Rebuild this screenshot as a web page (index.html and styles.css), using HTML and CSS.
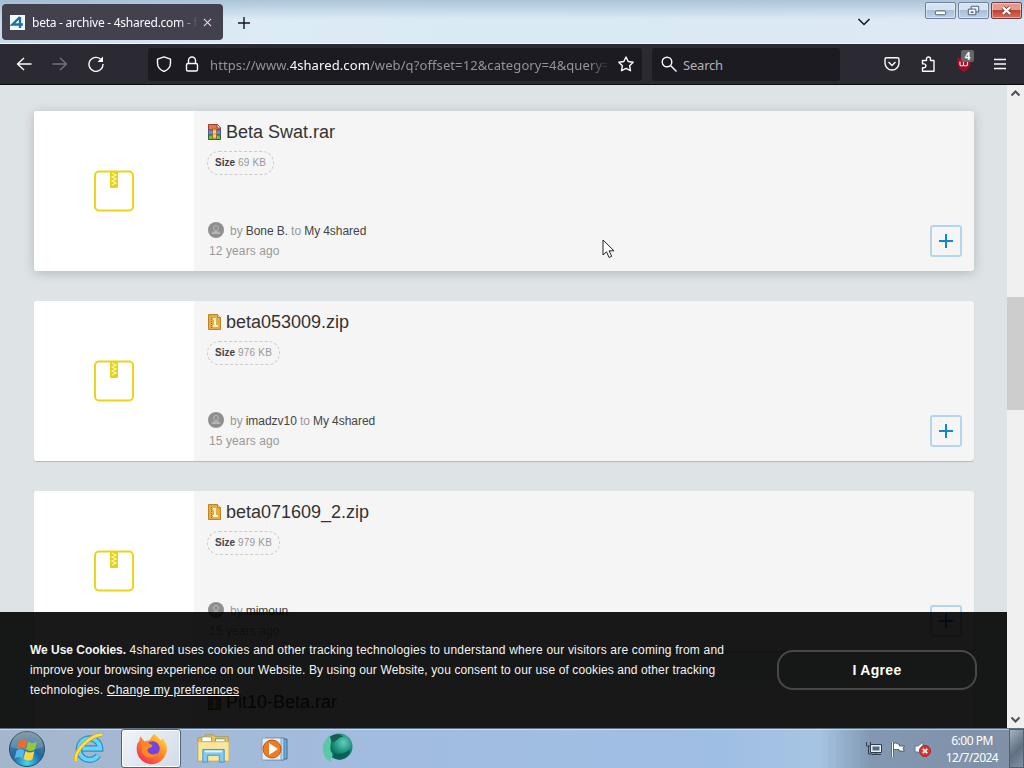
FILE: index.html
```html
<!DOCTYPE html>
<html lang="en">
<head>
    <meta charset="UTF-8">
    <meta name="viewport" content="width=device-width, initial-scale=1.0">
    <title>beta - archive - 4shared.com</title>
    <link rel="stylesheet" href="styles.css">
</head>
<body>
    <!-- shared icons -->
    <svg class="defs">
        <symbol id="box" viewBox="0 0 40 42">
            <rect x="1" y="1.5" width="38" height="39" rx="4" fill="none" stroke="#ead51c" stroke-width="2"/>
            <rect x="16" y="1" width="8" height="17" rx="1" fill="#e8d11c"/>
            <path d="M18 3l4 2-4 2 4 2-4 2 4 2-4 2" fill="none" stroke="#fff8a8" stroke-width="1.2"/>
        </symbol>
        <symbol id="zip" viewBox="0 0 13 16">
            <path d="M.5.5h9l3 3v12H.5z" fill="#e5ac45" stroke="#bb8424"/>
            <path d="M9.500.5v3h3" fill="#f8dfa6" stroke="#bb8424"/>
            <path d="M3.500 3v12" stroke="#a8741c" stroke-dasharray="1 1"/>
            <path d="M5 4h3v7h2v2H5v-2h1V6H5z" fill="#fff3d2"/>
        </symbol>
        <symbol id="rar" viewBox="0 0 13 16">
            <path d="M.5.5h9l3 3V6H.5z" fill="#e07a4e" stroke="#a33b2a"/>
            <path d="M9 .5v3.500h3.500" fill="#fff" stroke="#a33b2a"/>
            <path d="M.5 6h12v5H.5z" fill="#7385d6" stroke="#4d559c"/>
            <path d="M.5 11h12v4.500H.5z" fill="#6fc236" stroke="#2e681f"/>
            <path d="M4.500 5h4v10h-4z" fill="#e0b55a" stroke="#8b5f30" stroke-width=".7"/>
            <path d="M5 8h3M5 12h3" stroke="#fff0ab"/>
        </symbol>
        <symbol id="user" viewBox="0 0 16 16">
            <circle cx="8" cy="8" r="8" fill="#8f8f8f"/>
            <circle cx="8" cy="6" r="2.500" fill="none" stroke="#b8b8b8"/>
            <path d="M3.500 12c0-4 9-4 9 0z" fill="#b5b5b5"/>
        </symbol>
        <symbol id="plus" viewBox="0 0 16 16">
            <path d="M8 1v14M1 8h14" stroke="currentColor" stroke-width="2"/>
        </symbol>
    </svg>

    <div class="screen">
        <header class="titlebar">
            <div class="tab">
                <svg class="favicon" viewBox="0 0 15 15">
                    <path d="M0 0h15v15H0z" fill="#f2fafc"/>
                    <path d="M10 2L2.500 9.500H13M10 2v11" fill="none" stroke="#16769b" stroke-width="2.400"/>
                </svg>
                <span class="tab-title">beta - archive - 4shared.com - f</span>
                <svg class="tab-close" viewBox="0 0 10 10"><path d="M1 1l8 8M9 1L1 9"/></svg>
            </div>
            <svg class="new-tab" viewBox="0 0 12 12"><path d="M6 0v12M0 6h12"/></svg>
            <svg class="list-tabs" viewBox="0 0 14 8"><path d="M1.500 1l5.500 5.500L12.500 1"/></svg>
            <div class="window-buttons">
                <div class="wb"><svg viewBox="0 0 30 16"><rect x="9.500" y="8.500" width="11" height="4" rx="1" fill="#fff" stroke="#4c5a70"/></svg></div>
                <div class="wb"><svg viewBox="0 0 30 16"><g fill="#eef3fa" stroke="#4c5a70"><path d="M12.500 3.500h8v6h-8z"/><path d="M9.500 6.500h8v6h-8z"/></g><path d="M12 9h3v1.500h-3z" fill="#4c5a70"/></svg></div>
                <div class="wb wb-close"><svg viewBox="0 0 30 16"><path d="M11 4.500l8 7M19 4.500l-8 7" stroke="#693b40" stroke-width="4"/><path d="M11 4.500l8 7M19 4.500l-8 7" stroke="#fff" stroke-width="2.400"/></svg></div>
            </div>
        </header>

        <nav class="toolbar">
            <svg class="ico back" viewBox="0 0 16 16"><path d="M15.500 8H1.500M8 2L1.500 8 8 14"/></svg>
            <svg class="ico forward" viewBox="0 0 16 16"><path d="M.5 8h14M8 2l6.500 6L8 14"/></svg>
            <svg class="ico reload" viewBox="0 0 16 16"><path d="M13.500 4A7 7 0 1 0 15 8"/><path d="M15 .5V6H9.500z" fill="#fbfbfe" stroke="none"/></svg>
            <div class="urlbar">
                <svg class="ico" viewBox="0 0 16 16"><path d="M8 .8l6.500 2.400V7c0 4-2.800 7-6.500 8.500C4.300 14 1.500 11 1.500 7V3.200z"/></svg>
                <svg class="ico lock" viewBox="0 0 16 16"><rect x="2.500" y="7.500" width="11" height="7.500" rx="1.500"/><path d="M4.500 7.500V4.500a3.500 3.500 0 0 1 7 0v3"/></svg>
                <div class="url">https://www.<b>4shared.com</b>/web/q?offset=12&amp;category=4&amp;query=</div>
                <svg class="ico star" viewBox="0 0 16 16"><path d="M8 1l2.200 4.500 5 .7-3.600 3.500.9 5L8 12.400l-4.500 2.300.9-5L.8 6.200l5-.7z"/></svg>
            </div>
            <div class="searchbar">
                <svg class="ico" viewBox="0 0 16 16"><circle cx="6" cy="6" r="4.800"/><path d="M9.500 9.500l6 6"/></svg>
                <span>Search</span>
            </div>
            <div class="tools">
                <svg class="ico" viewBox="0 0 16 16"><path d="M2.500 1.700h11a1.500 1.500 0 0 1 1.500 1.500V7a7 7 0 0 1-14 0V3.200a1.500 1.500 0 0 1 1.500-1.500z"/><path d="M4.500 6L8 9.500 11.500 6"/></svg>
                <svg class="ico" viewBox="0 0 16 16"><path d="M2.500 4.500h4V3a2 2 0 0 1 4 0v1.500H14v10.700H2.500v-3.500H4a1.900 1.900 0 0 0 0-3.800H2.500z"/></svg>
                <div class="ublock">
                    <svg viewBox="0 0 16 16"><path d="M8 0c2 1.500 4 2 6.500 2v5c0 4-2.500 7-6.500 9-4-2-6.500-5-6.500-9V2C4 2 6 1.500 8 0z" fill="#a30c25"/><path d="M4 5.500v3c0 2 3.500 2 3.500 0V6v2.500c0 2 4 2 4 0V6" fill="none" stroke="#f5e9ee" stroke-width="1.200"/></svg>
                    <span class="badge">4</span>
                </div>
                <svg class="ico menu" viewBox="0 0 16 16"><path d="M2 3.500h12M2 8h12M2 12.500h12"/></svg>
            </div>
        </nav>

        <div class="viewport">
            <main class="results">
                <article class="card hover">
                    <div class="thumb"><svg><use href="#box"/></svg></div>
                    <div class="info">
                        <h2><svg><use href="#rar"/></svg>Beta Swat.rar</h2>
                        <div class="size"><b>Size</b> 69 KB</div>
                        <div class="author"><svg><use href="#user"/></svg><span>by <a>Bone B.</a> to <a>My 4shared</a></span></div>
                        <div class="date">12 years ago</div>
                    </div>
                    <div class="add"><svg><use href="#plus"/></svg></div>
                </article>
                <article class="card">
                    <div class="thumb"><svg><use href="#box"/></svg></div>
                    <div class="info">
                        <h2><svg><use href="#zip"/></svg>beta053009.zip</h2>
                        <div class="size"><b>Size</b> 976 KB</div>
                        <div class="author"><svg><use href="#user"/></svg><span>by <a>imadzv10</a> to <a>My 4shared</a></span></div>
                        <div class="date">15 years ago</div>
                    </div>
                    <div class="add"><svg><use href="#plus"/></svg></div>
                </article>
                <article class="card">
                    <div class="thumb"><svg><use href="#box"/></svg></div>
                    <div class="info">
                        <h2><svg><use href="#zip"/></svg>beta071609_2.zip</h2>
                        <div class="size"><b>Size</b> 979 KB</div>
                        <div class="author"><svg><use href="#user"/></svg><span>by <a>mimoun</a></span></div>
                        <div class="date">15 years ago</div>
                    </div>
                    <div class="add"><svg><use href="#plus"/></svg></div>
                </article>
                <article class="card">
                    <div class="thumb"></div>
                    <div class="info">
                        <h2><svg><use href="#rar"/></svg>Pit10-Beta.rar</h2>
                    </div>
                </article>
            </main>
            <div class="scrollbar">
                <svg viewBox="0 0 17 17"><path d="M4.500 10.500l4-4 4 4"/></svg>
                <div class="thumb-bar"></div>
                <svg viewBox="0 0 17 17"><path d="M4.500 6.500l4 4 4-4"/></svg>
            </div>
            <div class="cookies">
                <p>
                    <b>We Use Cookies.</b> 4shared uses cookies and other tracking technologies to understand where our visitors are coming from and<br>
                    <span class="line2">improve your browsing experience on our Website. By using our Website, you consent to our use of cookies and other tracking</span><br>
                    technologies. <u>Change my preferences</u>
                </p>
                <button class="agree">I Agree</button>
            </div>
        </div>

        <footer class="taskbar">
            <div class="task start">
                <svg viewBox="0 0 38 38">
                    <defs><radialGradient id="orb" cx=".5" cy=".9" r=".9"><stop offset="0" stop-color="#45d5f2"/><stop offset=".45" stop-color="#1e6aa0"/><stop offset="1" stop-color="#6d8795"/></radialGradient></defs>
                    <circle cx="19" cy="19" r="17.500" fill="url(#orb)" stroke="#294c68"/>
                    <path d="M3 17a16 16 0 0 1 32 0c-10 4-22 4-32 0z" fill="#fff" opacity=".18"/>
                    <path d="M11 11q4-3 8 0l-2 8q-4-3-8 0z" fill="#ee6b2e"/>
                    <path d="M20 11.500q4 3 9 0l-2 8q-4 3-9 0z" fill="#93c83e"/>
                    <path d="M8.500 20.500q4-3 8 0l-2 8q-4-3-8 0z" fill="#54b6ea"/>
                    <path d="M17.500 21q4 3 9 0l-2 8q-4 3-9 0z" fill="#fbd542"/>
                </svg>
            </div>
            <div class="task">
                <svg viewBox="0 0 34 34">
                    <path d="M26 24a11 11 0 1 1 2-7H10" fill="none" stroke="#2a91ca" stroke-width="6.500"/>
                    <path d="M26 24a11 11 0 1 1 2-7H10" fill="none" stroke="#69d4f5" stroke-width="4"/>
                    <path d="M30 3C22 1 1 17 3 30" fill="none" stroke="#d9a91d" stroke-width="4"/>
                    <path d="M30 3C22 1 1 17 3 30" fill="none" stroke="#ffe24b" stroke-width="2.400"/>
                </svg>
            </div>
            <div class="task active">
                <svg viewBox="0 0 32 32">
                    <defs><linearGradient id="fox" x1="1" y1="0" x2=".2" y2="1"><stop offset="0" stop-color="#fff15a"/><stop offset=".4" stop-color="#ff9a24"/><stop offset="1" stop-color="#f12c55"/></linearGradient></defs>
                    <path d="M5 4l4 5 5-1 4-6c5 2 5 5 7 6l2-2c4 6 5 10 3 15a14.500 14.500 0 0 1-28-1C1 15 2 10 4 9z" fill="url(#fox)"/>
                    <circle cx="17" cy="16" r="7" fill="#7543df"/>
                    <path d="M6 11c5-2 8 0 11 2-1 3-5 2-5 5 1 4 6 5 10 2-3 7-12 6-15 0z" fill="#ff8a22"/>
                </svg>
            </div>
            <div class="task">
                <svg viewBox="0 0 34 34">
                    <path d="M1 6h6l2-3h8l2 2h13v25H1z" fill="#e8c75c" stroke="#b99233"/>
                    <path d="M5 5h10v5H5z" fill="#fff" stroke="#93a469"/><path d="M19 7h10v4H19z" fill="#f5fff1" stroke="#819b70"/>
                    <path d="M1 10h32v20H1z" fill="#f8e69c" stroke="#d6b457"/>
                    <path d="M6 18h22v13h-5v-7H11v7H6z" fill="#83c9ef" stroke="#4b95c4"/><path d="M8 20h18" stroke="#d9f5ff" stroke-width="2"/>
                </svg>
            </div>
            <div class="task wmp">
                <svg viewBox="0 0 28 28">
                    <path d="M7 4h19v20H7z" fill="#72a9d6" stroke="#3c71a2"/><path d="M4 3h19v22H4z" fill="#b0d5ec" stroke="#5283ad"/><path d="M1 3h19v22H1z" fill="#e4edf4" stroke="#8ba4b8"/>
                    <circle cx="11" cy="14" r="9" fill="#ee7a22" stroke="#b95816"/><path d="M8 8l9 6-9 6z" fill="#fff"/>
                </svg>
            </div>
            <div class="task">
                <svg viewBox="0 0 34 34">
                    <defs><radialGradient id="orb2" cx=".65" cy=".35"><stop offset="0" stop-color="#5fcfba"/><stop offset="1" stop-color="#087564"/></radialGradient></defs>
                    <circle cx="19" cy="15" r="13.500" fill="url(#orb2)"/>
                    <path d="M10 3C-2 10 0 28 11 31c-2-5 3-7 0-10-3-4 0-7-1-18z" fill="#59c9a7"/>
                    <path d="M9 5c5-4 12-3 14 0-5 0-7 5-11 6z" fill="#185e56"/><path d="M13 21c5 3 12 1 17-3-2 10-12 13-17 8z" fill="#0a5f55"/>
                </svg>
            </div>
            <div class="tray">
                <svg viewBox="0 0 18 18"><g fill="#e9f1f8" stroke="#303f50"><path d="M5.500 4.500h11v8h-11z"/><path d="M7 14.500h9M11 12.500v2"/><path d="M1.500 2v4h4V2M3.500 6v8h4" fill="none"/></g><path d="M7.500 6.500h7v4h-7z" fill="#566b80"/></svg>
                <svg viewBox="0 0 18 18"><path d="M3.500 2v15" stroke="#2c3b4d" stroke-width="3"/><path d="M3.500 2v15" stroke="#fff" stroke-width="1.500"/><path d="M4.500 3.500c3-1.500 4 1 6 1V6h5l-1.500 2.500L15.500 11H10V9.500H4.500z" fill="#fff" stroke="#394a5e" stroke-width=".8"/></svg>
                <svg class="sound" viewBox="0 0 18 18"><path d="M2 6h3l5-4v14l-5-4H2z" fill="#f8fbff" stroke="#63758a"/><circle cx="12" cy="11" r="5.500" fill="#d8352d" stroke="#a32828"/><path d="M9.800 8.800l4.400 4.400M14.200 8.800l-4.400 4.400" stroke="#fff" stroke-width="1.700"/></svg>
            </div>
            <div class="clock"><span>6:00 PM</span><span>12/7/2024</span></div>
            <div class="show-desktop"></div>
        </footer>

        <svg class="cursor" viewBox="0 0 13 20"><path d="M1 1v15l3.500-3.200 2.600 5.700 2.600-1.200-2.600-5.500H12z" fill="#fff" stroke="#222"/></svg>
    </div>
</body>
</html>
```
FILE: styles.css
```css
* { margin: 0; padding: 0; box-sizing: border-box; }
body {
    overflow: hidden;
    font-family: "Liberation Sans", Arial, sans-serif;
}
svg { display: block; flex: none; }
.defs { position: absolute; width: 0; height: 0; }
.screen {
    position: relative;
    width: 1024px;
    height: 768px;
    display: flex;
    flex-direction: column;
    overflow: hidden;
}

/* browser window */
.titlebar {
    height: 44px;
    display: flex;
    align-items: flex-start;
    background: linear-gradient(rgba(133, 165, 194, 0.55), rgba(255, 255, 255, 0) 45%), linear-gradient(90deg, #c7d9ea, #dcebf5 25%, #d9eaf4 60%, #dfe8f5);
    border-bottom: 1px solid #f3f8fc;
}
.tab {
    width: 221px;
    height: 36px;
    margin: 4px 0 0 2px;
    padding: 0 11px 0 8px;
    display: flex;
    align-items: center;
    background: #42414d;
    border-radius: 4px;
    color: #fbfbfe;
    font-family: "Noto Sans", sans-serif;
    font-size: 12px;
}
.favicon { width: 15px; height: 15px; }
.tab-title {
    width: 166px;
    margin: 0 5px 0 7px;
    overflow: hidden;
    white-space: nowrap;
    letter-spacing: -0.25px;
    -webkit-mask-image: linear-gradient(90deg, #000 88%, transparent);
    mask-image: linear-gradient(90deg, #000 88%, transparent);
}
.tab-close { width: 9px; height: 9px; stroke: #dedee4; stroke-width: 1.2; }
.new-tab { width: 12px; height: 12px; margin: 17px 0 0 15px; stroke: #15141a; stroke-width: 1.4; }
.list-tabs { width: 14px; height: 8px; margin: 18px 54px 0 auto; stroke: #15141a; stroke-width: 1.5; fill: none; }
.window-buttons { display: flex; gap: 2px; padding: 2px 2px 0 0; }
.wb {
    width: 31px;
    height: 17px;
    border: 1px solid #6f839e;
    border-radius: 2px;
    background: linear-gradient(#d5e2f1 45%, #a9bfd9 50%, #bfd2e7);
    box-shadow: inset 0 0 0 1px rgba(255, 255, 255, 0.4);
}
.wb svg { width: 29px; height: 15px; }
.wb-close { background: linear-gradient(#e49a8d 45%, #c3412e 50%, #d4705d); border-color: #713b43; }

.toolbar {
    height: 41px;
    padding-left: 16px;
    display: flex;
    align-items: center;
    background: #2b2a33;
    border-bottom: 1px solid #0c0c0e;
    font-family: "Noto Sans", sans-serif;
    color: #fbfbfe;
}
.ico { width: 16px; height: 16px; fill: none; stroke: #fbfbfe; stroke-width: 1.4; stroke-linejoin: round; }
.forward { margin-left: 20px; stroke: #74737b; }
.reload { margin-left: 20px; }
.urlbar {
    width: 494px;
    height: 33px;
    margin-left: 44px;
    padding: 0 8px;
    display: flex;
    align-items: center;
    background: #1c1b22;
    border-radius: 3px;
}
.lock { margin-left: 12px; }
.url {
    width: 399px;
    margin: 0 9px 0 10px;
    padding-top: 1px;
    overflow: hidden;
    white-space: nowrap;
    font-size: 13px;
    letter-spacing: 0.1px;
    color: #94939b;
    -webkit-mask-image: linear-gradient(90deg, #000 95%, transparent);
    mask-image: linear-gradient(90deg, #000 95%, transparent);
}
.url b { font-weight: normal; color: #fbfbfe; }
.searchbar {
    width: 188px;
    height: 33px;
    margin-left: 10px;
    padding-left: 9px;
    display: flex;
    align-items: center;
    gap: 6px;
    background: #1c1b22;
    border-radius: 3px;
    font-size: 13px;
    letter-spacing: -0.2px;
    color: #b3b2b9;
}
.searchbar span { padding-top: 1px; }
.tools { display: flex; gap: 20px; margin-left: 44px; }
.ublock { position: relative; width: 16px; height: 16px; }
.badge {
    position: absolute;
    left: 5px;
    top: -6px;
    width: 13px;
    height: 12px;
    border-radius: 2px;
    background: #666;
    font-size: 10px;
    font-weight: bold;
    line-height: 12px;
    text-align: center;
}

/* page */
.viewport {
    position: relative;
    height: 643px;
    display: flex;
    overflow: hidden;
}
.results {
    width: 1007px;
    padding: 26px 33px 0 34px;
    display: flex;
    flex-direction: column;
    gap: 30px;
    background: #dee4e6;
}
.card {
    flex: none;
    height: 160px;
    display: flex;
    background: #f5f5f5;
    border-radius: 3px;
    box-shadow: 0 1px 1px rgba(0, 0, 0, 0.2);
}
.card.hover { box-shadow: 0 2px 12px rgba(0, 0, 0, 0.2); }
.thumb {
    width: 160px;
    display: flex;
    align-items: center;
    justify-content: center;
    background: #fff;
    border-radius: 3px 0 0 3px;
}
.thumb svg { width: 40px; height: 42px; }
.info {
    flex: 1;
    padding: 9px 0 11px 13px;
    display: flex;
    flex-direction: column;
    align-items: flex-start;
    font-size: 12px;
    color: #999;
}
.info h2 {
    display: flex;
    align-items: center;
    gap: 5px;
    padding-left: 1px;
    font-size: 18px;
    font-weight: normal;
    line-height: 24px;
    color: #333;
}
.info h2 svg { width: 13px; height: 16px; }
.size {
    height: 24px;
    margin-top: 7px;
    padding: 0 7px;
    border: 1px dashed #ccc;
    border-radius: 12px;
    font-size: 10px;
    line-height: 22px;
    letter-spacing: 0.2px;
    color: #999;
}
.size b { color: #444; letter-spacing: 0; }
.author {
    display: flex;
    align-items: center;
    gap: 6px;
    height: 18px;
    margin-top: auto;
    padding-left: 1px;
    letter-spacing: -0.03px;
    word-spacing: -0.2px;
}
.author svg { width: 16px; height: 16px; margin-top: -2px; }
.author a { color: #444; }
.date { padding: 3px 0 0 2px; line-height: 17px; letter-spacing: 0.1px; }
.add {
    width: 32px;
    height: 32px;
    margin: 114px 12px 0 0;
    display: flex;
    align-items: center;
    justify-content: center;
    border: 2px solid #b4d6ec;
    border-radius: 3px;
    color: #1684ca;
}
.add svg { width: 16px; height: 16px; }
.scrollbar {
    width: 17px;
    display: flex;
    flex-direction: column;
    background: #f0f0f0;
}
.scrollbar svg { width: 17px; height: 17px; fill: none; stroke: #505050; stroke-width: 2; }
.thumb-bar { height: 113px; margin: 195px 0 auto; background: #cdcdcd; }

/* cookie notice */
.cookies {
    position: absolute;
    left: 0;
    bottom: 0;
    width: 1007px;
    height: 116px;
    padding: 0 30px;
    display: flex;
    align-items: center;
    justify-content: space-between;
    background: rgba(0, 0, 0, 0.9);
    color: #f4f4f4;
    font-size: 12px;
    line-height: 20px;
}
.cookies p { white-space: nowrap; letter-spacing: 0.2px; }
.cookies b { letter-spacing: -0.03px; }
.line2 { letter-spacing: 0.115px; }
.agree {
    width: 200px;
    height: 40px;
    border: 2px solid #484848;
    border-radius: 16px;
    background: none;
    color: #fff;
    font: bold 14px "Liberation Sans", Arial, sans-serif;
    letter-spacing: 0.3px;
}

/* taskbar */
.taskbar {
    height: 40px;
    display: flex;
    align-items: center;
    background: linear-gradient(90deg, #a5b6cc, #a2bce0 35%, #9fbee4 70%, #a6c4e2 80%, #8298b2 85%, #7f8fa6);
    border-top: 1px solid #5d7285;
    box-shadow: inset 0 1px 0 rgba(255, 255, 255, 0.45);
}
.task {
    width: 60px;
    height: 39px;
    margin-right: 2px;
    display: flex;
    align-items: center;
    justify-content: center;
}
.task svg { width: 33px; height: 33px; }
.start { width: 54px; margin-right: 5px; }
.start svg { width: 38px; height: 38px; }
.active {
    border: 1px solid #53657c;
    border-radius: 3px;
    background: linear-gradient(135deg, #f0f4f9, #d0dbe8);
    box-shadow: inset 0 0 0 1px #fff;
}
.wmp svg { width: 28px; height: 28px; }
.tray { display: flex; gap: 6px; margin-left: auto; }
.tray svg { width: 18px; height: 18px; }
.clock {
    width: 74px;
    margin-left: 4px;
    display: flex;
    flex-direction: column;
    align-items: center;
    font-family: "Noto Sans", sans-serif;
    font-size: 12px;
    line-height: 17px;
    letter-spacing: -0.5px;
    color: #fff;
}
.show-desktop {
    width: 15px;
    height: 39px;
    border: 1px solid #516173;
    background: linear-gradient(135deg, #a6b2c0, #5f7082 55%, #8492a4);
}
.cursor { position: absolute; left: 602px; top: 239px; width: 13px; height: 20px; }
```
